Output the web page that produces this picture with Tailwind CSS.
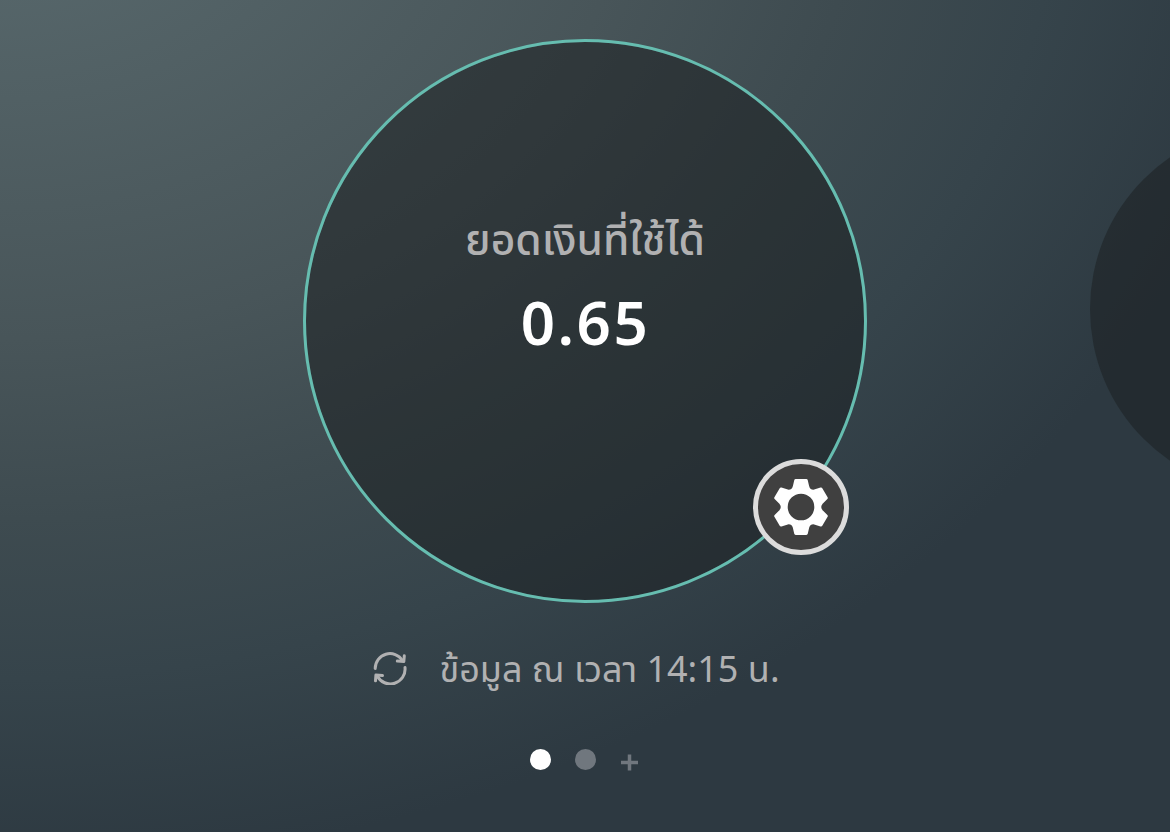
<!DOCTYPE html>
<html lang="th">
<head>
  <meta charset="UTF-8">
  <meta name="viewport" content="width=device-width, initial-scale=1.0">
  <title>ยอดเงินที่ใช้ได้</title>
  <script src="https://cdn.jsdelivr.net/npm/@tailwindcss/browser@4"></script>
</head>
<body class="h-screen overflow-hidden bg-[#2d3940] font-['Noto_Sans','Noto_Sans_Thai',sans-serif]">
  <main class="relative flex h-[832px] w-full flex-col items-center overflow-hidden bg-[radial-gradient(1330px_1060px_at_0px_-170px,#56666a_13%,#485559_48%,#3e4b50_65%,#36444b_80%,#2d3941_98%)] pt-[39px]">
    <!-- Balance -->
    <section class="relative flex size-[564px] shrink-0 flex-col items-center rounded-full border-[3px] border-[#66bdb0] bg-[#1a1e21]/52 bg-clip-padding pt-[164px]">
      <h1 class="h-[66px] text-[42.5px] leading-[66px] font-medium whitespace-nowrap text-[#b1b1b2]">ยอดเงินที่ใช้ได้</h1>
      <p class="mt-[10px] ml-[1px] h-[80px] text-[60px] leading-[80px] font-[560] tracking-[2.5px] text-white">0.65</p>

      <button type="button" aria-label="Settings" class="absolute top-[417px] left-[447px] flex size-24 items-center justify-center rounded-full border-[5px] border-[#dcdcdc] bg-[#404040]">
        <svg class="size-[68px]" viewBox="0 0 68 68" fill="#fff" stroke="#fff" stroke-width="3" stroke-linejoin="round">
          <path fill-rule="evenodd" d="M28.700 7.500h10.600l1.500 6.500q1.500 4.500 6 4.200l7.200-2.200 5.300 9-5 5q-3.200 4 0 8l5 5-5.300 9-7.200-2.200q-4.500-.3-6 4.200l-1.500 6.500h-10.600l-1.500-6.500q-1.500-4.500-6-4.200l-7.200 2.200-5.300-9 5-5q3.200-4 0-8l-5-5 5.300-9 7.200 2.200q4.500.3 6-4.200zM34 19.200a14.800 14.800 0 1 0 0 29.600a14.800 14.800 0 1 0 0-29.600z" />
        </svg>
      </button>
    </section>

    <!-- Next account -->
    <div class="absolute top-[125px] left-[1090px] size-[368px] rounded-full bg-[#1a1e21]/52"></div>

    <!-- Last update -->
    <div class="mt-[38px] mr-[17px] flex h-[56px] items-center text-[#b1b1b2]">
      <svg class="mb-[2px] size-[34px]" viewBox="0 0 34 34" fill="none" stroke="currentColor" stroke-width="3" stroke-linecap="round" stroke-linejoin="round">
        <path d="M2.200 17.500A14.800 14.800 0 0 1 29.500 9.500" />
        <path d="M31.300 4.800l-.5 5.700-6.500-.5" />
        <path d="M32 16.500A14.800 14.800 0 0 1 4.200 25" />
        <path d="M2.500 29.800l.4-5.800 6.600.6" />
      </svg>
      <p class="ml-[32px] text-[36px] leading-[56px] whitespace-nowrap">ข้อมูล ณ เวลา 14:15 น.</p>
    </div>

    <!-- Pager -->
    <div class="mt-[51px] mr-[3px] flex items-center gap-6">
      <span class="size-[21px] rounded-full bg-white"></span>
      <span class="size-[21px] rounded-full bg-[#70777e]"></span>
      <svg class="mt-[6px] ml-px size-[17px]" viewBox="0 0 17 17" stroke="#70777e" stroke-width="3.5">
        <path d="M8.5 .5v16M0 8.5h17" />
      </svg>
    </div>
  </main>
</body>
</html>
